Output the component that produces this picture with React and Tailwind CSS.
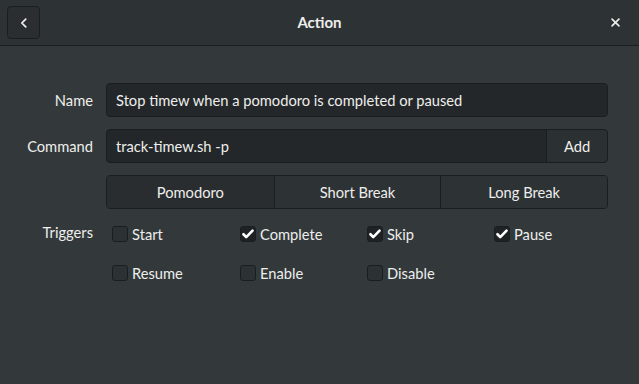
import { useState } from 'react'

const Check = ({ label, checked, onToggle }) => (
  <button
    type="button"
    onClick={onToggle}
    className="flex items-center gap-[4px] h-[20px] text-[#eeeeec]"
  >
    <span
      className={`flex items-center justify-center w-[16px] h-[16px] rounded-[3px] border border-[#1b1e1f] ${
        checked ? 'bg-[#1f2223]' : 'bg-[#2c3133]'
      }`}
    >
      {checked && (
        <svg viewBox="0 0 16 16" className="w-[14px] h-[14px]">
          <path d="M2.8 8.3l3.2 3.3 7.2-7.4" fill="none" stroke="#ffffff" strokeWidth="3" strokeLinecap="round" strokeLinejoin="round" />
        </svg>
      )}
    </span>
    <span>{label}</span>
  </button>
)

const App = () => {
  const [mode, setMode] = useState('Pomodoro')
  const [triggers, setTriggers] = useState({
    Start: false,
    Complete: true,
    Skip: true,
    Pause: true,
    Resume: false,
    Enable: false,
    Disable: false,
  })

  const toggle = (key) => setTriggers((t) => ({ ...t, [key]: !t[key] }))

  return (
    <div
      className="w-[639px] h-[384px] bg-[#33393b] text-[#eeeeec] text-[14.7px] overflow-hidden flex flex-col"
      style={{ fontFamily: 'Lato, "Noto Sans", sans-serif' }}
    >
      {/* Header */}
      <header className="h-[46px] flex items-center justify-between px-[7px] bg-[#2d3234] border-b border-[#1b1f20] shrink-0">
        <button
          type="button"
          className="w-[33px] h-[33px] flex items-center justify-center rounded-[4px] border border-[#1b1e1f] bg-[#2a2e30]"
        >
          <svg viewBox="0 0 16 16" className="w-[14px] h-[14px]">
            <path d="M10 3.5L5.5 8l4.5 4.5" fill="none" stroke="#eeeeec" strokeWidth="2" strokeLinecap="round" strokeLinejoin="round" />
          </svg>
        </button>
        <h1 className="font-bold text-[15px]">Action</h1>
        <button type="button" className="w-[33px] h-[33px] flex items-center justify-center">
          <svg viewBox="0 0 16 16" className="w-[11px] h-[11px]">
            <path d="M3 3l10 10M13 3L3 13" fill="none" stroke="#eeeeec" strokeWidth="2.4" strokeLinecap="round" />
          </svg>
        </button>
      </header>

      {/* Form */}
      <main className="grid grid-cols-[93px_502px] gap-x-[13px] gap-y-[12px] pt-[37px]">
        <label className="self-center text-right">Name</label>
        <div className="h-[34px] flex items-center px-[9px] rounded-[4px] border border-[#1b1e1f] bg-[#232729]">
          Stop timew when a pomodoro is completed or paused
        </div>

        <label className="self-center text-right">Command</label>
        <div className="h-[34px] flex rounded-[4px] border border-[#1b1e1f] bg-[#232729]">
          <div className="flex-1 flex items-center px-[9px]">track-timew.sh -p</div>
          <button type="button" className="w-[61px] border-l border-[#1b1e1f] bg-[#2b3032] rounded-r-[4px]">
            Add
          </button>
        </div>

        <div />
        <div className="h-[34px] grid grid-cols-3 rounded-[4px] border border-[#1b1e1f] overflow-hidden">
          {['Pomodoro', 'Short Break', 'Long Break'].map((m, i) => (
            <button
              key={m}
              type="button"
              onClick={() => setMode(m)}
              className={`${i > 0 ? 'border-l border-[#1b1e1f]' : ''} ${
                mode === m ? 'bg-[#292d2f]' : 'bg-[#2d3234]'
              }`}
            >
              {m}
            </button>
          ))}
        </div>

        <label className="text-right">Triggers</label>
        <div className="grid grid-cols-[128px_127px_127px_auto] gap-y-[19px] pl-[6px] pt-[3px]">
          {['Start', 'Complete', 'Skip', 'Pause', 'Resume', 'Enable', 'Disable'].map((k) => (
            <Check key={k} label={k} checked={triggers[k]} onToggle={() => toggle(k)} />
          ))}
        </div>
      </main>
    </div>
  )
}

export default App
